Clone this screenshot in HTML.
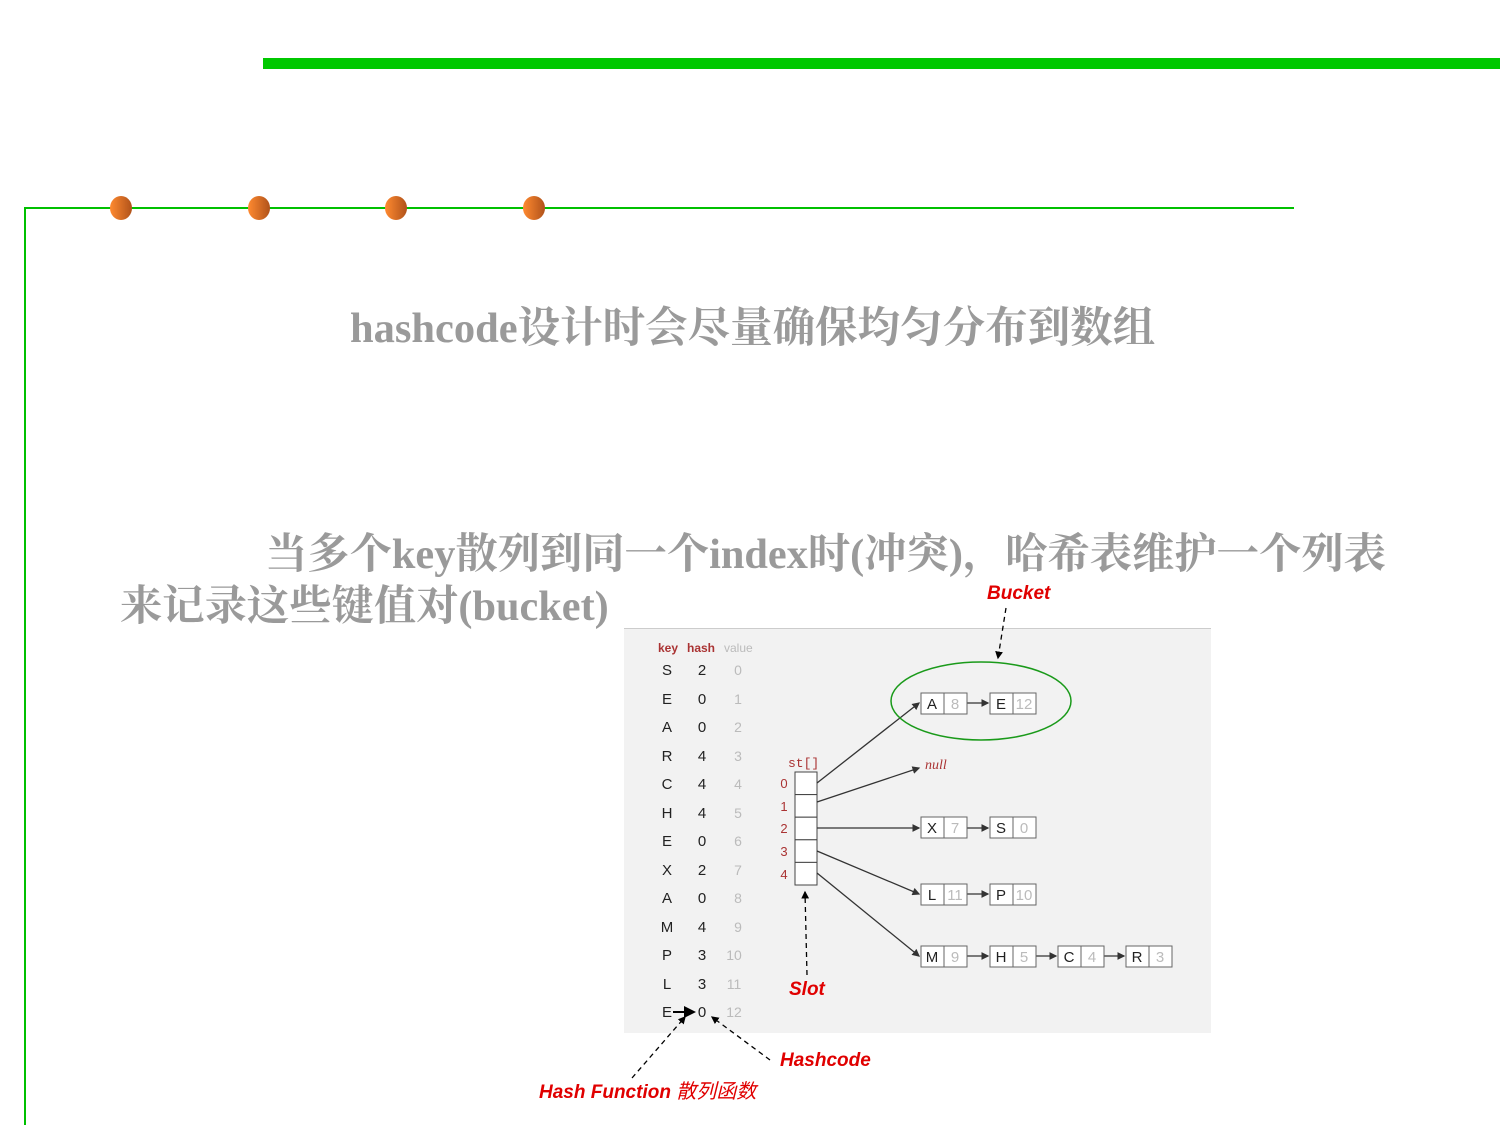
<!DOCTYPE html>
<html><head><meta charset="utf-8"><style>
html,body{margin:0;padding:0;background:#fff;width:1500px;height:1125px;overflow:hidden;position:relative}
.t{position:absolute;font-family:"Liberation Serif","Noto Serif CJK SC",serif;color:#9a9a9a;font-weight:bold;font-size:42.5px;white-space:nowrap;line-height:1}
.red{position:absolute;font-family:"Liberation Sans","Noto Sans CJK SC",sans-serif;color:#e00000;font-weight:bold;font-style:italic;font-size:19px;white-space:nowrap;line-height:1}
</style></head><body>
<div style="position:absolute;left:263px;top:58px;width:1237px;height:11px;background:#00c800"></div>
<div style="position:absolute;left:24px;top:207px;width:1270px;height:2px;background:#00c000"></div>
<div style="position:absolute;left:24px;top:207px;width:2px;height:918px;background:#00c000"></div>
<svg style="position:absolute;left:0;top:0" width="1500" height="1125">
<defs><linearGradient id="g" x1="0" x2="1"><stop offset="0" stop-color="#ff8a30"/><stop offset="1" stop-color="#b0521a"/></linearGradient></defs>
<ellipse cx="121" cy="208" rx="11" ry="12" fill="url(#g)"/>
<ellipse cx="259" cy="208" rx="11" ry="12" fill="url(#g)"/>
<ellipse cx="396" cy="208" rx="11" ry="12" fill="url(#g)"/>
<ellipse cx="534" cy="208" rx="11" ry="12" fill="url(#g)"/>
</svg>
<div class="t" style="left:350px;top:308px">hashcode设计时会尽量确保均匀分布到数组</div>
<div class="t" style="left:265px;top:534px;font-size:42.3px">当多个key散列到同一个index时(冲突)，哈希表维护一个列表</div>
<div class="t" style="left:120px;top:586px;font-size:42.3px">来记录这些键值对(bucket)</div>

<svg style="position:absolute;left:0;top:0" width="1500" height="1125" font-family="Liberation Sans, sans-serif">
<defs><marker id="a" markerWidth="6" markerHeight="6" refX="5" refY="3" orient="auto"><path d="M0,0L6,3L0,6z" fill="#333"/></marker>
<marker id="b" markerWidth="6" markerHeight="6" refX="5" refY="3" orient="auto"><path d="M0,0L6,3L0,6z" fill="#000"/></marker></defs>
<rect x="624" y="628" width="587" height="405" fill="#f2f2f2"/>
<line x1="624" y1="628.5" x2="1211" y2="628.5" stroke="#ccc"/>
<g font-size="12" font-weight="bold" fill="#a33">
<text x="658" y="652">key</text><text x="687" y="652">hash</text></g>
<text x="724" y="652" font-size="12" fill="#bbb">value</text>
<g font-size="15" fill="#222" text-anchor="middle">
<text x="667" y="675">S</text><text x="702" y="675">2</text>
<text x="667" y="704">E</text><text x="702" y="704">0</text>
<text x="667" y="732">A</text><text x="702" y="732">0</text>
<text x="667" y="761">R</text><text x="702" y="761">4</text>
<text x="667" y="789">C</text><text x="702" y="789">4</text>
<text x="667" y="818">H</text><text x="702" y="818">4</text>
<text x="667" y="846">E</text><text x="702" y="846">0</text>
<text x="667" y="875">X</text><text x="702" y="875">2</text>
<text x="667" y="903">A</text><text x="702" y="903">0</text>
<text x="667" y="932">M</text><text x="702" y="932">4</text>
<text x="667" y="960">P</text><text x="702" y="960">3</text>
<text x="667" y="989">L</text><text x="702" y="989">3</text>
<text x="667" y="1017">E</text><text x="702" y="1017">0</text>
</g>
<g font-size="14" fill="#bbb" text-anchor="middle">
<text x="738" y="675">0</text><text x="738" y="704">1</text><text x="738" y="732">2</text><text x="738" y="761">3</text><text x="738" y="789">4</text><text x="738" y="818">5</text><text x="738" y="846">6</text><text x="738" y="875">7</text><text x="738" y="903">8</text><text x="738" y="932">9</text><text x="734" y="960">10</text><text x="734" y="989">11</text><text x="734" y="1017">12</text>
</g>
<line x1="673" y1="1012" x2="694" y2="1012" stroke="#000" stroke-width="2" marker-end="url(#b)"/>
<text x="788" y="767" font-size="13" font-family="Liberation Mono, monospace" fill="#a33">st[]</text>
<g font-size="13" fill="#a33" text-anchor="middle"><text x="784" y="788">0</text><text x="784" y="811">1</text><text x="784" y="833">2</text><text x="784" y="856">3</text><text x="784" y="879">4</text></g>
<g fill="#fff" stroke="#444"><rect x="795" y="772" width="22" height="22.6"/><rect x="795" y="794.6" width="22" height="22.6"/><rect x="795" y="817.2" width="22" height="22.6"/><rect x="795" y="839.8" width="22" height="22.6"/><rect x="795" y="862.4" width="22" height="22.6"/></g>
<g stroke="#333" stroke-width="1.3" marker-end="url(#a)">
<line x1="817" y1="783" x2="919" y2="703"/>
<line x1="817" y1="802" x2="919" y2="768"/>
<line x1="817" y1="828" x2="919" y2="828"/>
<line x1="817" y1="851" x2="919" y2="894"/>
<line x1="817" y1="873" x2="919" y2="956"/>
<line x1="967" y1="703" x2="988" y2="703"/><line x1="967" y1="828" x2="988" y2="828"/><line x1="967" y1="894" x2="988" y2="894"/>
<line x1="967" y1="956" x2="988" y2="956"/><line x1="1036" y1="956" x2="1056" y2="956"/><line x1="1104" y1="956" x2="1124" y2="956"/>
</g>
<text x="925" y="769" font-size="14" font-style="italic" font-family="Liberation Serif, serif" fill="#a33">null</text>
<g font-size="15" text-anchor="middle">
<g fill="#fff" stroke="#666">
<rect x="921" y="693" width="23" height="21"/><rect x="944" y="693" width="23" height="21"/><rect x="990" y="693" width="23" height="21"/><rect x="1013" y="693" width="23" height="21"/>
<rect x="921" y="817" width="23" height="21"/><rect x="944" y="817" width="23" height="21"/><rect x="990" y="817" width="23" height="21"/><rect x="1013" y="817" width="23" height="21"/>
<rect x="921" y="884" width="23" height="21"/><rect x="944" y="884" width="23" height="21"/><rect x="990" y="884" width="23" height="21"/><rect x="1013" y="884" width="23" height="21"/>
<rect x="921" y="946" width="23" height="21"/><rect x="944" y="946" width="23" height="21"/><rect x="990" y="946" width="23" height="21"/><rect x="1013" y="946" width="23" height="21"/>
<rect x="1058" y="946" width="23" height="21"/><rect x="1081" y="946" width="23" height="21"/><rect x="1126" y="946" width="23" height="21"/><rect x="1149" y="946" width="23" height="21"/>
</g>
<g fill="#222"><text x="932" y="709">A</text><text x="1001" y="709">E</text><text x="932" y="833">X</text><text x="1001" y="833">S</text><text x="932" y="900">L</text><text x="1001" y="900">P</text><text x="932" y="962">M</text><text x="1001" y="962">H</text><text x="1069" y="962">C</text><text x="1137" y="962">R</text></g>
<g fill="#bbb"><text x="955" y="709">8</text><text x="1024" y="709">12</text><text x="955" y="833">7</text><text x="1024" y="833">0</text><text x="955" y="900">11</text><text x="1024" y="900">10</text><text x="955" y="962">9</text><text x="1024" y="962">5</text><text x="1092" y="962">4</text><text x="1160" y="962">3</text></g>
</g>
<ellipse cx="981" cy="701" rx="90" ry="39" fill="none" stroke="#1a9a1a" stroke-width="1.5"/>
<g stroke="#000" stroke-width="1.3" stroke-dasharray="5,4" fill="none">
<line x1="1006" y1="608" x2="998" y2="658" marker-end="url(#b)"/>
<line x1="807" y1="975" x2="805" y2="892" marker-end="url(#b)"/>
<line x1="632" y1="1078" x2="685" y2="1017" marker-end="url(#b)"/>
<line x1="770" y1="1060" x2="712" y2="1017" marker-end="url(#b)"/>
</g>
</svg>
<div class="red" style="left:987px;top:584px">Bucket</div>
<div class="red" style="left:789px;top:980px">Slot</div>
<div class="red" style="left:780px;top:1051px">Hashcode</div>
<div class="red" style="left:539px;top:1080px">Hash Function <span style="font-weight:normal;font-size:20px;font-family:'Noto Sans CJK SC',sans-serif">散列函数</span></div>
</body></html>
